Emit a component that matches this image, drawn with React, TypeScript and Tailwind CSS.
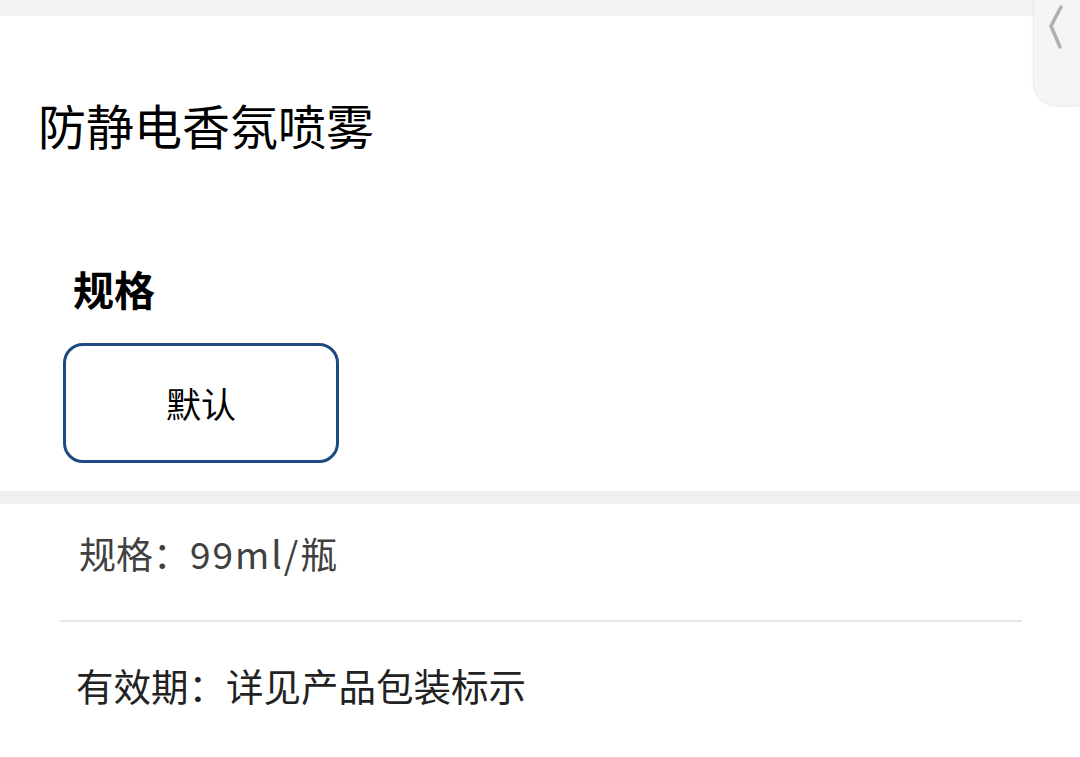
export default function App() {
  return (
    <div
      className="relative w-[1080px] h-[757px] overflow-hidden bg-white"
      style={{ fontFamily: '"Noto Sans CJK SC", "Noto Sans", sans-serif' }}
    >
      {/* top strip */}
      <div className="h-[16px] bg-[#f2f2f2]" />

      {/* title */}
      <div className="pl-[38px] pt-[80px] text-[48px] leading-[56px] text-black">
        防静电香氛喷雾
      </div>

      {/* spec selector */}
      <div className="pl-[63px] pt-[112px]">
        <div className="pl-[10px] text-[41px] leading-[48px] font-bold text-black">规格</div>
        <div className="mt-[31px] w-[276px] h-[120px] flex items-center justify-center rounded-[20px] border-[3px] border-[#1d4a80] text-[35px] text-black">
          默认
        </div>
      </div>

      {/* gray separator */}
      <div className="mt-[28px] h-[13px] bg-[#f0f0f0]" />

      {/* info rows */}
      <div className="px-[58px]">
        <div className="h-[116px] flex items-center pb-[16px] pl-[21px] text-[37px] text-[#404040]">
          规格：<span className="tracking-[2px]">99ml/</span>瓶
        </div>
        <div className="ml-[2px] w-[962px] h-[2px] bg-[#e6e6e6]" />
        <div className="h-[134px] flex items-center pb-[8px] pl-[18px] text-[37.5px] text-[#222]">
          有效期：详见产品包装标示
        </div>
      </div>

      {/* side tab */}
      <div className="absolute top-0 right-0 w-[47px] h-[106px] rounded-bl-[24px] bg-[#f5f5f5] border-l border-b border-[#ececec] shadow-[0_1px_3px_rgba(0,0,0,0.06)]">
        <svg className="absolute left-[14px] top-[4px]" width="16" height="46" viewBox="0 0 16 46">
          <polyline
            points="13,3 3,22 12,43"
            fill="none"
            stroke="#b0b0b0"
            strokeWidth="3.5"
            strokeLinecap="round"
            strokeLinejoin="round"
          />
        </svg>
      </div>
    </div>
  );
}
